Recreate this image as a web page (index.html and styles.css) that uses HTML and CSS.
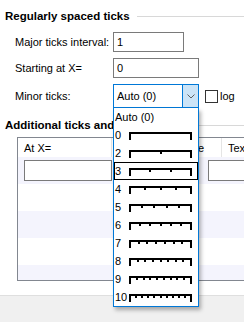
FILE: index.html
```html
<!DOCTYPE html>
<html lang="en">
<head>
  <meta charset="UTF-8" />
  <title>Ticks</title>
  <link rel="stylesheet" href="styles.css">
</head>
<body>
  <div class="panel">
    <div class="group-title">Regularly spaced ticks</div>

    <div class="fields">
      <label>Major ticks interval:</label>
      <input class="text major" value="1">

      <label>Starting at X=</label>
      <input class="text start" value="0">

      <label>Minor ticks:</label>
      <div class="minor">
        <div class="combo">
          <span class="combo-value">Auto (0)</span>
          <span class="combo-btn">
            <svg width="8" height="5" viewBox="0 0 8 5"><polyline points="0.5,0.5 4,4 7.5,0.5" fill="none" stroke="#606060" stroke-width="1"/></svg>
          </span>
          <ul class="combo-list" id="minor-list"></ul>
        </div>
        <label class="check"><span class="box"></span>log</label>
      </div>
    </div>

    <div class="group-title second">Additional ticks and labels</div>

    <div class="grid-box">
      <div class="grid-head">
        <div class="cell c1">At X=</div>
        <div class="cell c2 right">Label type</div>
        <div class="cell c3">Text</div>
      </div>
      <div class="grid-row odd">
        <div class="cell c1"><input class="text cell-input"></div>
        <div class="cell c2"></div>
        <div class="cell c3"><input class="text cell-input"></div>
      </div>
      <div class="grid-row"></div>
      <div class="grid-row odd"></div>
      <div class="grid-row"></div>
      <div class="grid-row odd"></div>
    </div>
  </div>

  <div class="bottom-bar"></div>

  <script>
    // ruler preview for each minor tick count
    function ruler(n) {
      let ticks = '';
      for (let i = 1; i < n; i++) {
        const x = Math.round(i * 61 / n);
        ticks += `<rect x="${x}" y="0" width="2" height="4"/>`;
      }
      return `<svg class="ruler" width="63" height="8" viewBox="0 0 63 8">
        <rect x="0" y="0" width="63" height="2"/>
        <rect x="0" y="0" width="2" height="8"/>
        <rect x="61" y="0" width="2" height="8"/>
        ${ticks}
      </svg>`;
    }

    const counts = [0, 2, 3, 4, 5, 6, 7, 8, 9, 10];
    let html = '<li class="item">Auto (0)</li>';
    counts.forEach(n => {
      const cls = n === 3 ? 'item selected' : 'item';
      html += `<li class="${cls}"><span class="num">${n}</span>${ruler(n)}</li>`;
    });
    document.getElementById('minor-list').innerHTML = html;
  </script>
</body>
</html>
```

FILE: styles.css
```css
* {
  box-sizing: border-box;
  margin: 0;
  padding: 0;
}

body {
  font-family: "Liberation Sans", Arial, sans-serif;
  font-size: 11px;
  color: #000;
  background: #fff;
  width: 244px;
  height: 322px;
  overflow: hidden;
  display: flex;
  flex-direction: column;
}

.panel {
  flex: 1;
  padding: 8px 0 0 5px;
}

.group-title {
  display: flex;
  align-items: center;
  gap: 7px;
  height: 16px;
  font-size: 11.5px;
  font-weight: bold;
  white-space: nowrap;
}

.group-title::after {
  content: "";
  flex: 1;
  height: 1px;
  background: #d8d8d8;
}

.group-title.second {
  margin-top: 9px;
}

.fields {
  display: grid;
  grid-template-columns: 98px auto;
  row-gap: 6px;
  align-items: center;
  margin-top: 8px;
  padding-left: 10px;
  white-space: nowrap;
}

.text {
  font: inherit;
  color: #000;
  height: 20px;
  border: 1px solid #7a7a7a;
  padding: 0 3px;
  background: #fff;
  outline: none;
}

.major {
  width: 71px;
}

.start {
  width: 86px;
}

.minor {
  display: flex;
  align-items: center;
}

.combo {
  position: relative;
  display: flex;
  width: 86px;
  height: 24px;
  border: 1px solid #0078d7;
  z-index: 2;
}

.combo-value {
  flex: 1;
  padding-left: 3px;
  line-height: 22px;
}

.combo-btn {
  width: 16px;
  background: #cce4f7;
  border-left: 1px solid #0078d7;
  display: flex;
  align-items: center;
  justify-content: center;
}

.combo-list {
  position: absolute;
  left: -1px;
  top: calc(100% + 1px);
  width: 86px;
  list-style: none;
  background: #fff;
  border: 1px solid #0078d7;
  border-top: none;
  box-shadow: 2px 3px 4px rgba(0, 0, 0, 0.3);
}

.item {
  display: flex;
  align-items: center;
  height: 18px;
  padding-left: 1px;
}

.item.selected {
  box-shadow: inset 0 0 0 1px #000;
}

.num {
  width: 14px;
}

.ruler {
  fill: #000;
  margin-top: 2px;
}

.check {
  display: flex;
  align-items: center;
  gap: 2px;
  margin-left: 6px;
}

.box {
  width: 13px;
  height: 13px;
  border: 1px solid #333;
  background: #fff;
}

.grid-box {
  width: 280px;
  height: 144px;
  margin: 4px 0 0 12px;
  border: 1px solid #828790;
  overflow: hidden;
  white-space: nowrap;
}

.grid-head {
  display: flex;
  height: 19px;
  align-items: stretch;
}

.grid-head .cell {
  display: flex;
  align-items: center;
  border-right: 1px solid #e5e5e5;
}

.grid-row {
  display: flex;
  align-items: center;
  height: 27px;
}

.grid-row.odd {
  background: #f4f4fd;
}

.cell {
  padding-left: 6px;
}

.c1 {
  width: 94px;
}

.c2 {
  width: 110px;
}

.c3 {
  flex: 1;
}

.right {
  justify-content: flex-end;
  padding-right: 17px;
}

.cell-input {
  width: 88px;
  height: 21px;
}

.bottom-bar {
  height: 27px;
  background: #f0f0f0;
  border-top: 1px solid #dfdfdf;
}
```
